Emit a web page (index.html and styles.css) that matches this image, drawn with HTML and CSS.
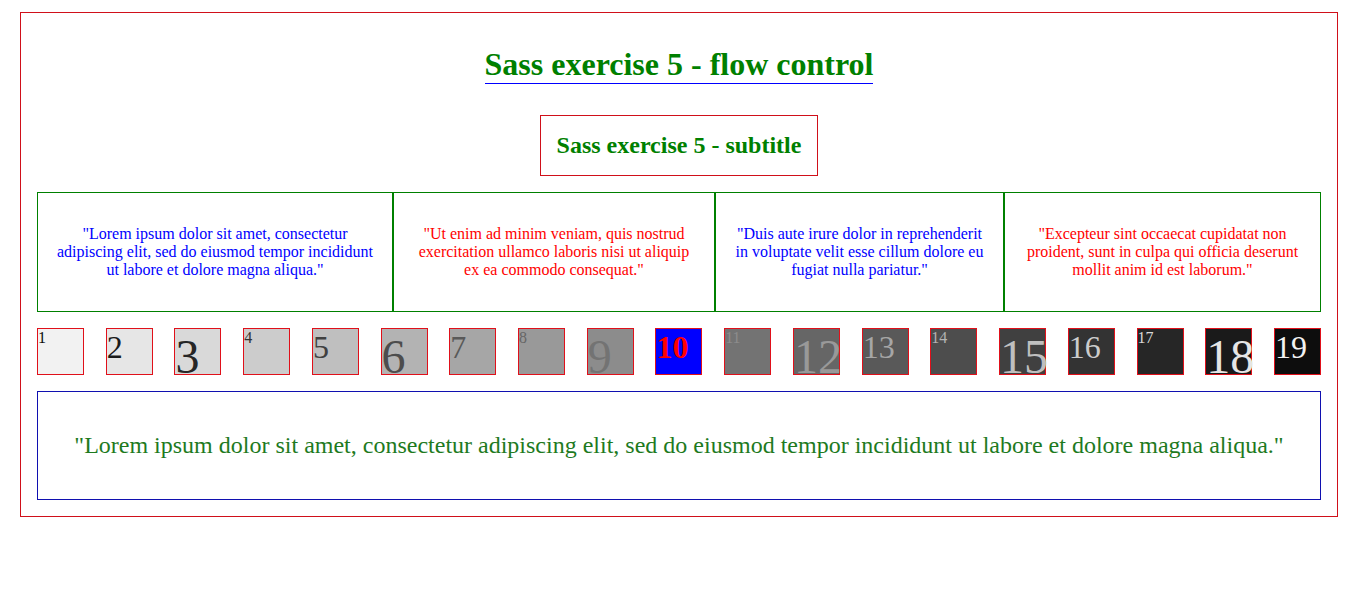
FILE: index.html
```html
<!DOCTYPE html>
<html lang="en">
<head>
<meta charset="utf-8">
<title>Sass exercise 5 - flow control</title>
<link rel="stylesheet" href="styles.css">
</head>
<body>
<div class="page">
  <header class="head">
    <h1 class="title">Sass exercise 5 - flow control</h1>
  </header>
  <h2 class="subtitle">Sass exercise 5 - subtitle</h2>
  <div class="cols">
    <p class="col col-blue">"Lorem ipsum dolor sit amet, consectetur adipiscing elit, sed do eiusmod tempor incididunt ut labore et dolore magna aliqua."</p>
    <p class="col col-red">"Ut enim ad minim veniam, quis nostrud exercitation ullamco laboris nisi ut aliquip ex ea commodo consequat."</p>
    <p class="col col-blue">"Duis aute irure dolor in reprehenderit in voluptate velit esse cillum dolore eu fugiat nulla pariatur."</p>
    <p class="col col-red">"Excepteur sint occaecat cupidatat non proident, sunt in culpa qui officia deserunt mollit anim id est laborum."</p>
  </div>
  <div class="boxes">
    <div class="box b1 s">1</div>
    <div class="box b2 m">2</div>
    <div class="box b3 l">3</div>
    <div class="box b4 s">4</div>
    <div class="box b5 m">5</div>
    <div class="box b6 l">6</div>
    <div class="box b7 m">7</div>
    <div class="box b8 s">8</div>
    <div class="box b9 l">9</div>
    <div class="box b10 m">10</div>
    <div class="box b11 s">11</div>
    <div class="box b12 l">12</div>
    <div class="box b13 m">13</div>
    <div class="box b14 s">14</div>
    <div class="box b15 l">15</div>
    <div class="box b16 m">16</div>
    <div class="box b17 s">17</div>
    <div class="box b18 l">18</div>
    <div class="box b19 m">19</div>
  </div>
  <p class="quote">"Lorem ipsum dolor sit amet, consectetur adipiscing elit, sed do eiusmod tempor incididunt ut labore et dolore magna aliqua."</p>
</div>
</body>
</html>
```
FILE: styles.css
```css
html, body {
  margin: 0;
  padding: 0;
  background: #fff;
}
body {
  font-family: "Liberation Serif", "Times New Roman", serif;
  font-size: 16px;
}
.page {
  margin: 12px 14px 0 20px;
  border: 1px solid #d0101a;
  padding: 16px;
  display: flex;
  flex-direction: column;
  gap: 16px;
}
.head {
  display: flex;
  justify-content: center;
  padding: 17px 0 15px;
}
.title {
  margin: 0;
  font-size: 32px;
  font-weight: bold;
  line-height: 37px;
  color: #008000;
  border-bottom: 1px solid #0000ff;
}
.subtitle {
  align-self: center;
  margin: 0;
  padding: 16px;
  border: 1px solid #d0101a;
  font-size: 24px;
  line-height: 27px;
  font-weight: bold;
  color: #008000;
}
.cols {
  display: grid;
  grid-template-columns: 356px 322px 289px 317px;
}
.col {
  margin: 0;
  padding: 32px 16px;
  border: 1px solid #008000;
  text-align: center;
  line-height: 18px;
}
.col-blue { color: #0000ff; }
.col-red { color: #ff0000; }
.boxes {
  display: flex;
  justify-content: space-between;
  align-items: flex-start;
}
.box {
  width: 45px;
  height: 45px;
  border: 1px solid #e0101a;
  line-height: normal;
  white-space: nowrap;
}
.s { font-size: 16px; }
.m { font-size: 32px; }
.l { font-size: 48px; }
.b1 { background: #f2f2f2; color: #0d0d0d; }
.b2 { background: #e6e6e6; color: #1a1a1a; }
.b3 { background: #d9d9d9; color: #262626; }
.b4 { background: #cccccc; color: #333333; }
.b5 { background: #bfbfbf; color: #404040; }
.b6 { background: #b3b3b3; color: #4d4d4d; }
.b7 { background: #a6a6a6; color: #595959; }
.b8 { background: #999999; color: #666666; }
.b9 { background: #8c8c8c; color: #737373; }
.b10 { background: #0000ff; color: #ff0000; font-weight: bold; }
.b11 { background: #737373; color: #8c8c8c; }
.b12 { background: #666666; color: #999999; }
.b13 { background: #595959; color: #a6a6a6; }
.b14 { background: #4d4d4d; color: #b3b3b3; }
.b15 { background: #404040; color: #bfbfbf; }
.b16 { background: #333333; color: #cccccc; }
.b17 { background: #262626; color: #d9d9d9; }
.b18 { background: #1a1a1a; color: #e6e6e6; }
.b19 { background: #0d0d0d; color: #f2f2f2; }
.quote {
  margin: 0;
  padding: 40px 16px;
  border: 1px solid #1010b0;
  text-align: center;
  font-size: 24px;
  line-height: 27px;
  color: #1e7a1e;
}
```
